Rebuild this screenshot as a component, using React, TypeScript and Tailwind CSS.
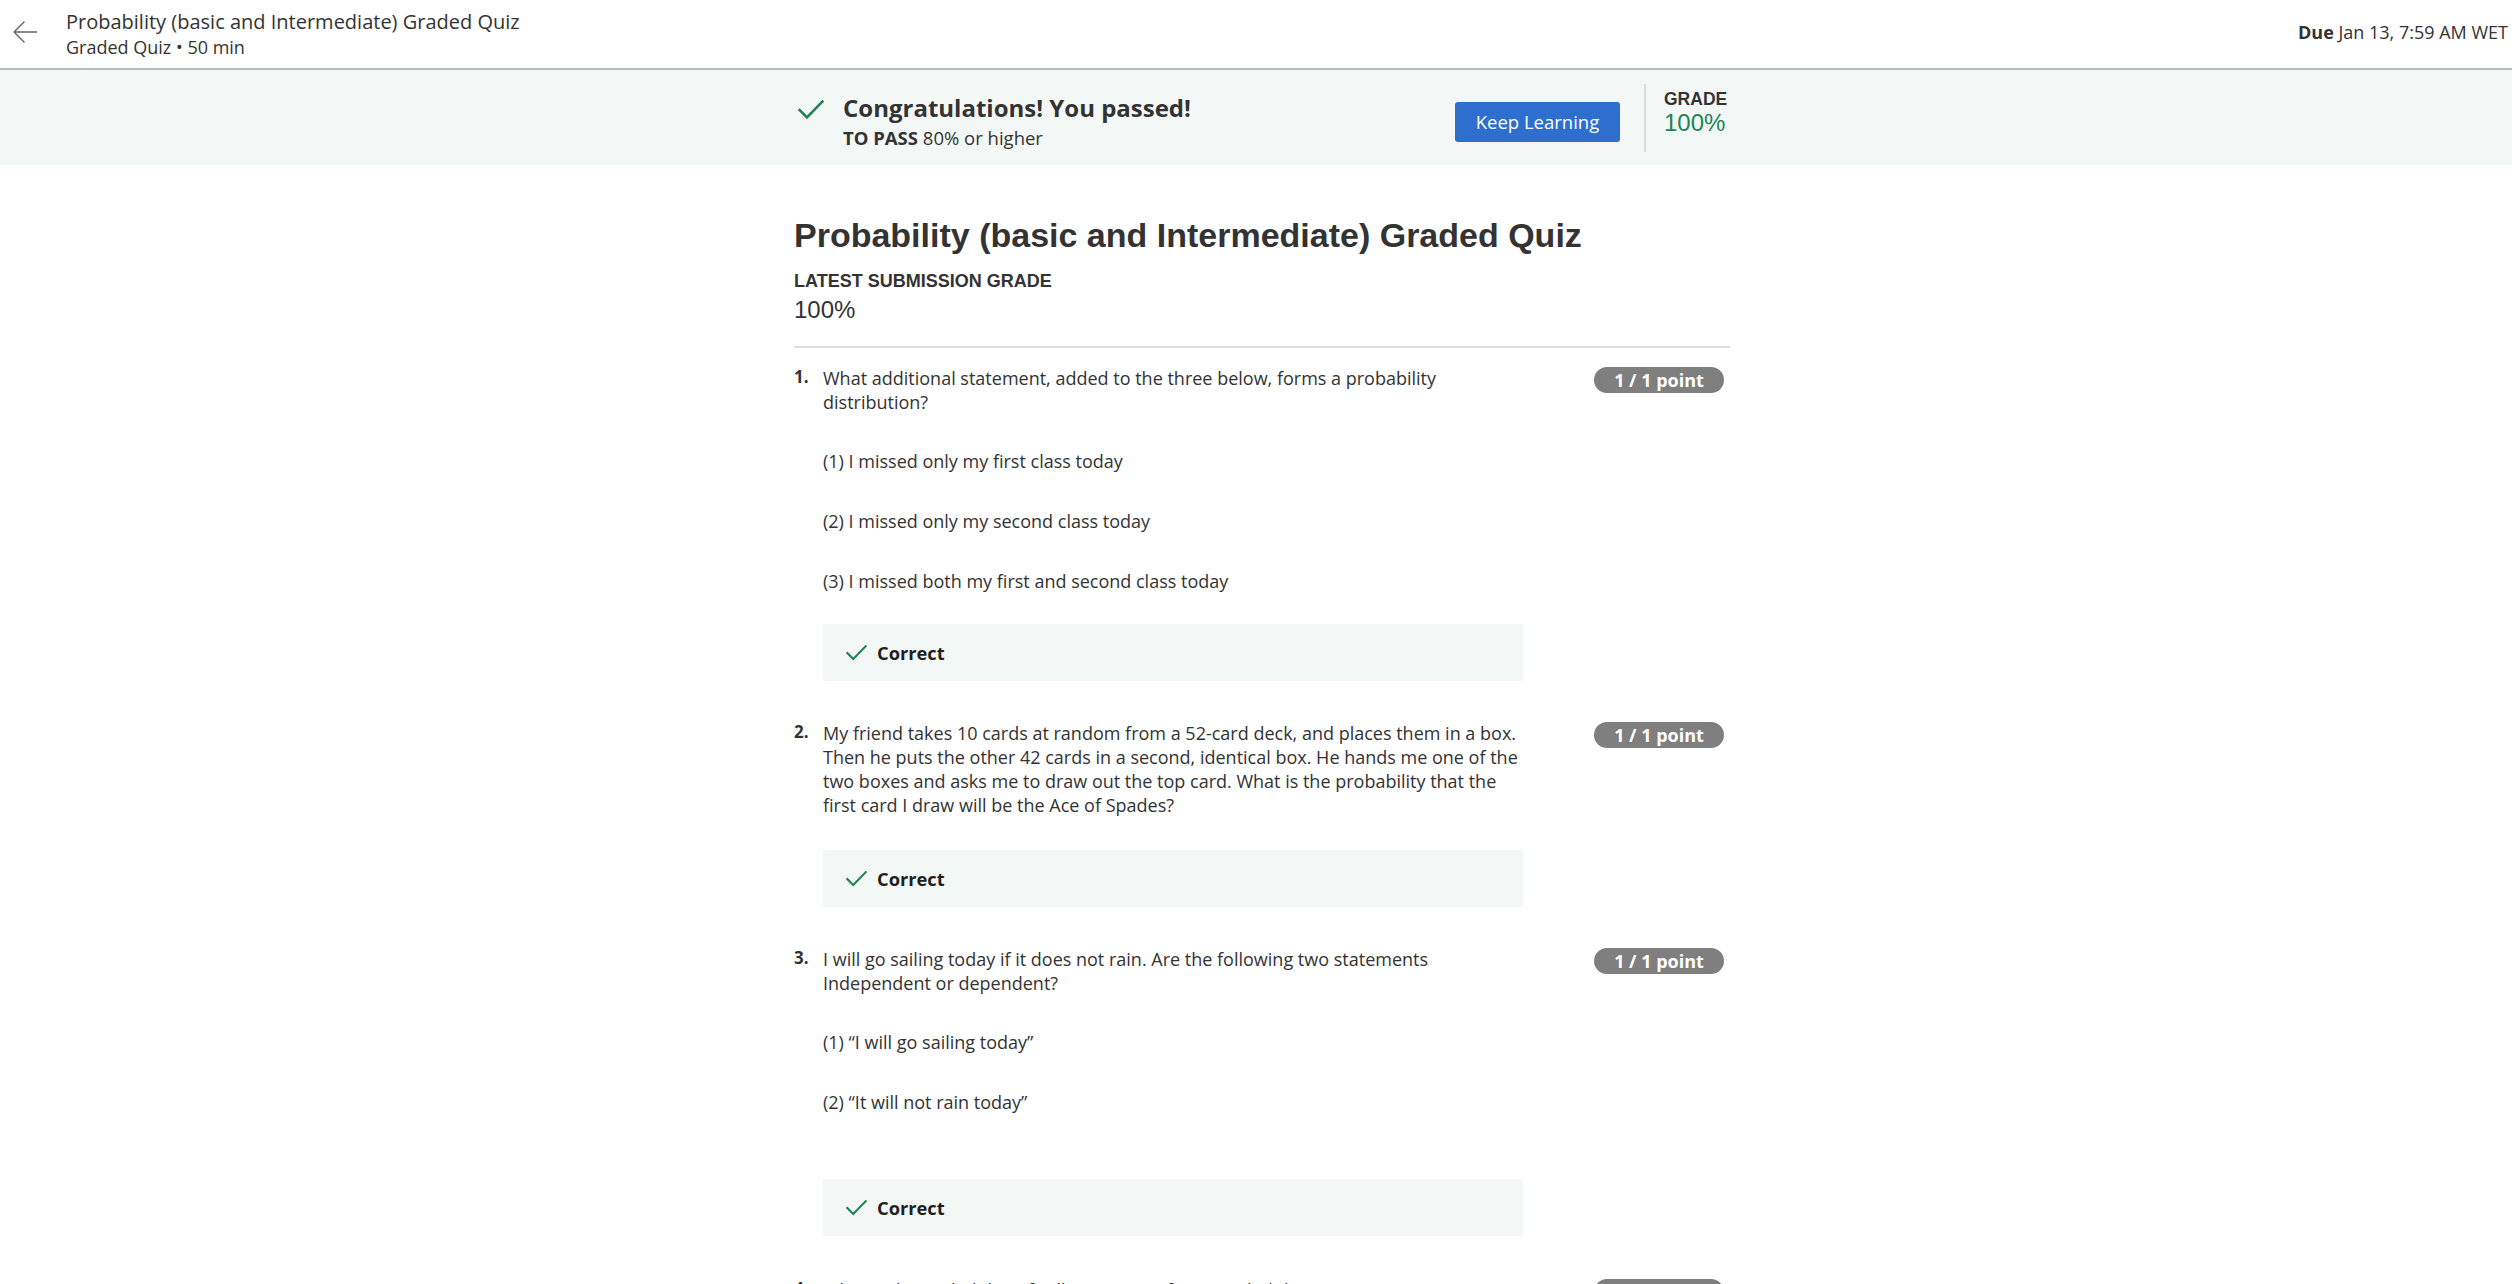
import React from "react";

const Check = ({ className }: { className?: string }) => (
  <svg viewBox="0 0 26 20" className={className} fill="none">
    <polyline points="1.5,10 9,17.5 24.5,1.5" stroke="#1f8354" strokeWidth="2.6" strokeLinecap="square" strokeLinejoin="miter" />
  </svg>
);

const Badge = () => (
  <div className="ml-auto mr-[6px] mt-[1px] h-[26px] w-[130px] shrink-0 rounded-full bg-[#7f7f7f] flex items-center justify-center text-white font-bold text-[18px] leading-none">
    1 / 1 point
  </div>
);

const CorrectBox = ({ mt }: { mt: string }) => (
  <div className={`${mt} h-[57px] w-[700px] bg-[#f3f8f6] flex items-center pl-[23px]`}>
    <Check className="w-[21px] h-[16px]" />
    <span className="ml-[10px] font-bold text-[18.3px] text-[#1f1f1f]">Correct</span>
  </div>
);

function Question({
  n,
  lines,
  options,
  boxMt,
  mt,
}: {
  n: number;
  lines: string;
  options: string[];
  boxMt: string;
  mt: string;
}) {
  return (
    <div className={`${mt} flex items-start`}>
      <div className="w-[29px] shrink-0 font-bold text-[17px] leading-[24px] -mt-[1px]">{n}.</div>
      <div className="w-[702px] shrink-0">
        <p className="text-[18px] leading-[24px] text-[#333]">{lines}</p>
        {options.map((o, i) => (
          <p key={i} className={`${i === 0 ? "mt-[35px]" : "mt-[36px]"} text-[18px] leading-[24px] text-[#333]`}>
            {o}
          </p>
        ))}
        <CorrectBox mt={boxMt} />
      </div>
      <Badge />
    </div>
  );
}

export default function App() {
  return (
    <div className="min-h-screen bg-white text-[#333]" style={{ fontFamily: '"Open Sans", "Noto Sans", sans-serif' }}>
      <header className="h-[70px] border-b-2 border-[#bdbdbd] flex items-center justify-between pl-[12px] pr-[4px]">
        <div className="flex items-center">
          <svg viewBox="0 0 26 26" className="w-[26px] h-[26px] -mt-[4px]" fill="none">
            <path d="M2 13 H25 M2 13 L12.5 2.5 M2 13 L12.5 23.5" stroke="#666" strokeWidth="1.4" />
          </svg>
          <div className="ml-[28px]">
            <div className="text-[20px] leading-[26px] text-[#333]">Probability (basic and Intermediate) Graded Quiz</div>
            <div className="text-[18px] leading-[24px] text-[#333]">Graded Quiz • 50 min</div>
          </div>
        </div>
        <div className="text-[18px] text-[#333] -mt-[4px]">
          <span className="font-bold">Due</span> Jan 13, 7:59 AM WET
        </div>
      </header>

      <div className="bg-[#f3f8f6] h-[95px]">
        <div className="mx-auto w-[948px] pl-[12px] flex items-start h-full">
          <Check className="ml-[4px] mt-[30px] w-[26px] h-[20px] shrink-0" />
          <div className="ml-[19px] mt-[22px] flex-1">
            <div className="font-bold text-[24px] leading-[32px] text-[#333]">Congratulations! You passed!</div>
            <div className="mt-[2px] text-[18.5px] leading-[24px] text-[#333]">
              <span className="font-bold">TO PASS</span> 80% or higher
            </div>
          </div>
          <button className="mt-[32px] h-[40px] w-[165px] rounded-[3px] bg-[#2d6ecf] text-white text-[18.5px] flex items-center justify-center shrink-0">
            Keep Learning
          </button>
          <div className="ml-[24px] mt-[14px] h-[68px] w-[2px] bg-[#dcdcdc] shrink-0" />
          <div className="ml-[18px] mt-[19px] w-[66px] shrink-0" style={{ fontFamily: '"Liberation Sans", Arial, sans-serif' }}>
            <div className="font-bold text-[17.5px] leading-[20px] text-[#333]">GRADE</div>
            <div className="text-[24px] leading-[28px] text-[#1f8354]">100%</div>
          </div>
        </div>
      </div>

      <main className="mx-auto w-[948px] pl-[12px] pt-[50px]">
        <div style={{ fontFamily: '"Liberation Sans", Arial, sans-serif' }}>
          <h1 className="font-bold text-[34px] leading-[40px] text-[#333]">Probability (basic and Intermediate) Graded Quiz</h1>
          <div className="mt-[15px] font-bold text-[18px] leading-[22px] text-[#333]">LATEST SUBMISSION GRADE</div>
          <div className="mt-[4px] text-[24px] leading-[28px] text-[#333]">100%</div>
        </div>
        <div className="mt-[22px] h-[2px] bg-[#dddddd]" />

        <Question
          mt="mt-[18px]"
          n={1}
          lines="What additional statement, added to the three below, forms a probability distribution?"
          options={[
            "(1) I missed only my first class today",
            "(2) I missed only my second class today",
            "(3) I missed both my first and second class today",
          ]}
          boxMt="mt-[31px]"
        />
        <Question
          mt="mt-[40px]"
          n={2}
          lines="My friend takes 10 cards at random from a 52-card deck, and places them in a box. Then he puts the other 42 cards in a second, identical box. He hands me one of the two boxes and asks me to draw out the top card. What is the probability that the first card I draw will be the Ace of Spades?"
          options={[]}
          boxMt="mt-[33px]"
        />
        <Question
          mt="mt-[40px]"
          n={3}
          lines="I will go sailing today if it does not rain. Are the following two statements Independent or dependent?"
          options={["(1) “I will go sailing today”", "(2) “It will not rain today”"]}
          boxMt="mt-[65px]"
        />
        <Question
          mt="mt-[42px]"
          n={4}
          lines="What is the probability of rolling a 6 on a fair six-sided die?"
          options={[]}
          boxMt="mt-[33px]"
        />
        <div className="h-[60px]" />
      </main>
    </div>
  );
}
